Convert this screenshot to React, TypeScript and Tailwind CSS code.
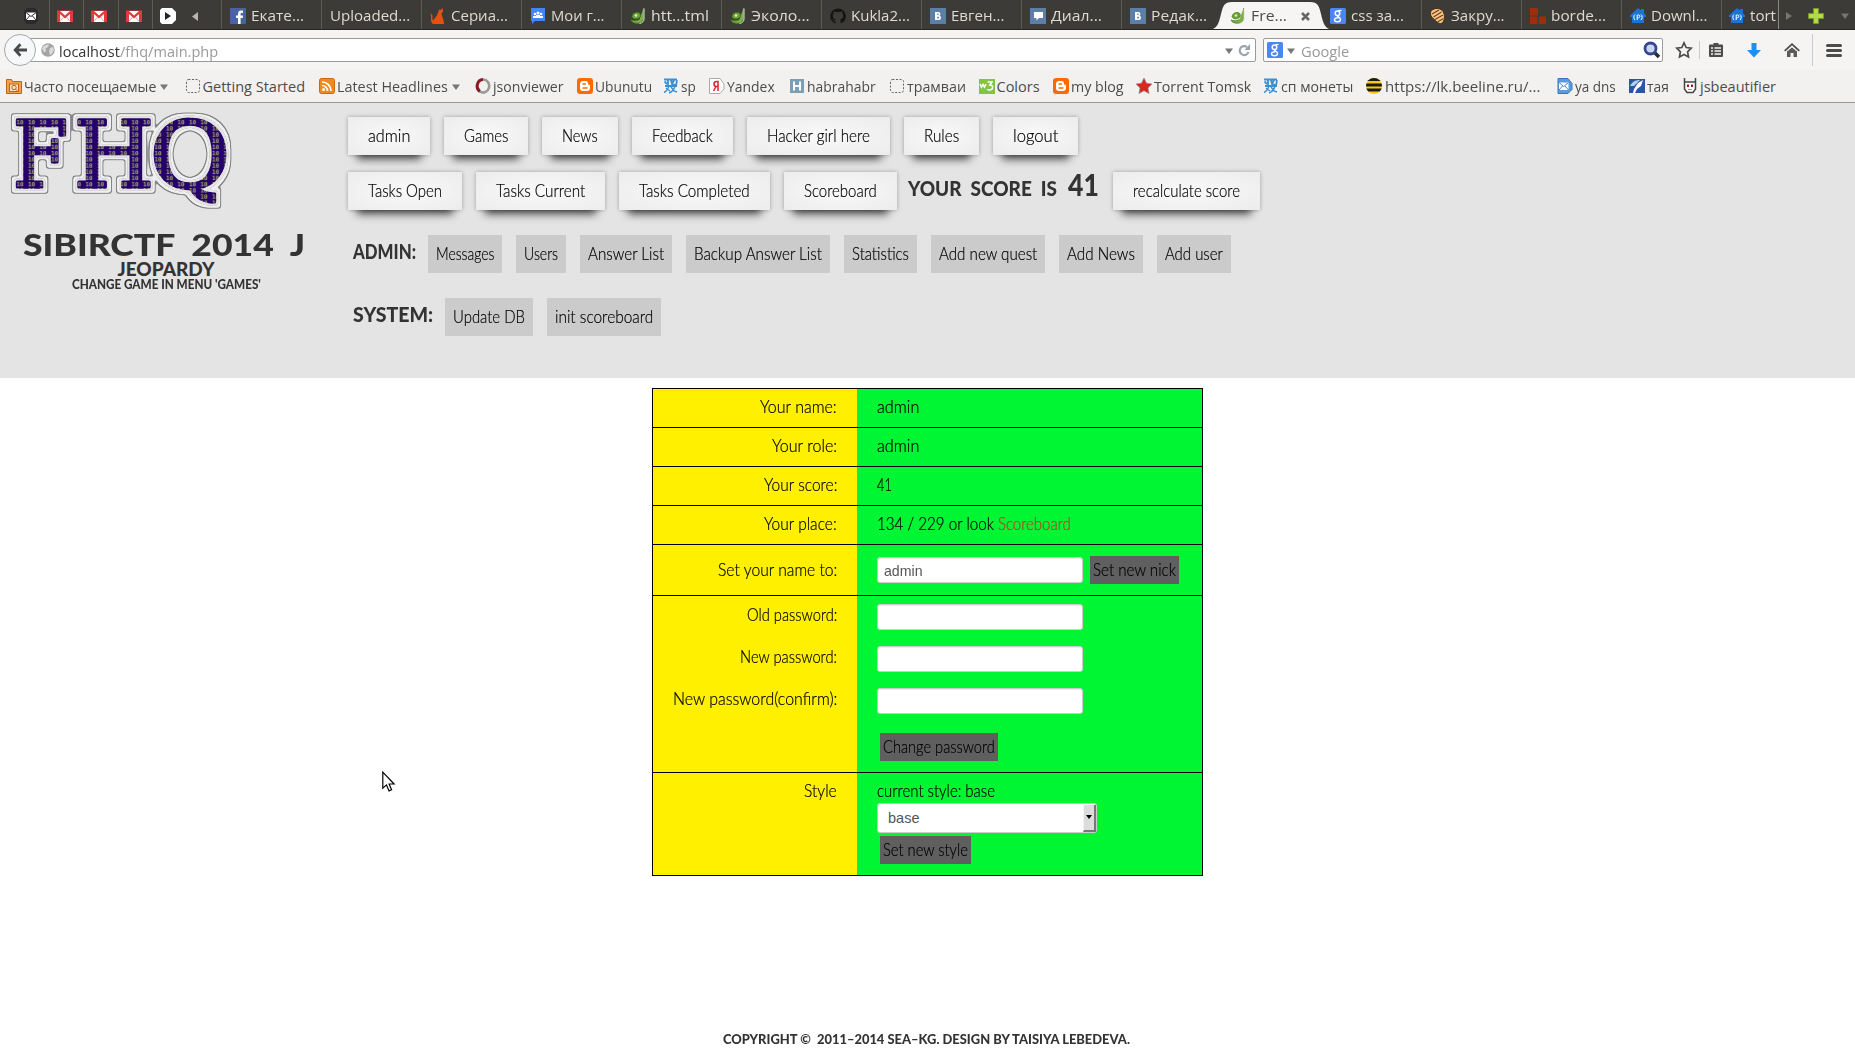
import React, { useLayoutEffect, useRef, useState } from "react";

type FitProps = { w: number; className?: string; children: React.ReactNode };

/* A single line of text stretched or narrowed to a given width. */
function Fit({ w, className = "", children }: FitProps) {
  const ref = useRef<HTMLSpanElement>(null);
  const [k, setK] = useState(1);
  useLayoutEffect(() => {
    if (ref.current) setK(w / ref.current.offsetWidth);
  }, [w]);
  return (
    <span className={`inline-flex shrink-0 whitespace-nowrap ${className}`} style={{ width: w }}>
      <span ref={ref} className="inline-block shrink-0 origin-left whitespace-pre" style={{ transform: `scaleX(${k})` }}>
        {children}
      </span>
    </span>
  );
}

const UI = "font-['Open_Sans',sans-serif]";
const HAND = "font-['Lato',sans-serif] font-black text-[#333]";
const BODY = "font-['Lato',sans-serif] text-[17px] font-light leading-[22px] text-black [-webkit-text-stroke:0.2px_currentColor]";

function Icon({ kind }: { kind: string }) {
  const p = { width: 16, height: 16, viewBox: "0 0 16 16", className: "shrink-0" };
  switch (kind) {
    case "mail":
      return (
        <svg {...p}>
          <path d="M4 0h8l3 3v10l-3 3H4l-3-3V3z" fill="#2b2b2b" />
          <rect x="3" y="4.500" width="10" height="7.500" fill="#fff" />
          <path d="M3 4.500l5 4 5-4M3 12l3.500-4M13 12l-3.500-4" fill="none" stroke="#2b2b2b" />
        </svg>
      );
    case "gmail":
      return (
        <svg {...p}>
          <rect y="2.500" width="16" height="11.500" fill="#e03a3a" />
          <path d="M3 3h10L8 7.500z" fill="#fff" />
          <path d="M3 14V6l5 4.500L13 6v8z" fill="#fff" />
          <path d="M3 13.500L6.500 9M13 13.500L9.500 9" stroke="#e9a0a0" />
        </svg>
      );
    case "play":
      return (
        <svg {...p}>
          <path d="M2 0h10l4 4v8l-4 4H2l-2-2V2z" fill="#fff" />
          <path d="M5 4l6 4-6 4z" fill="#222" />
        </svg>
      );
    case "fb":
      return (
        <svg {...p}>
          <rect width="16" height="16" rx="1" fill="#4862a3" />
          <path d="M8 16V10H6V7.500h2V6c0-2.400 1.300-3.500 3.300-3.500H13V5h-1.300c-.8 0-1.100.3-1.100 1v1.500H13L12.700 10h-2.100v6z" fill="#fff" />
        </svg>
      );
    case "cat":
      return (
        <svg {...p}>
          <path d="M8 5l1-3.500L10.500 2 12.500 0l.5 3.500-1.500 2L12 8l1.500 4 .5 4H4c-2 0-3-2-3-4.500C1 9 1.500 7 0 5.500c2.500.5 3 2.500 2.300 5L3 12.500 6.500 8z" fill="#e8500f" />
        </svg>
      );
    case "group":
      return (
        <svg {...p}>
          <path d="M1 0h14v13H5l-3 3v-3H1z" fill="#4285f4" />
          <circle cx="5" cy="6" r="1.300" fill="#fff" /><circle cx="8" cy="5" r="1.500" fill="#fff" /><circle cx="11" cy="6" r="1.300" fill="#fff" />
          <path d="M3 10V8h3V7h4v1h3v2z" fill="#fff" />
        </svg>
      );
    case "snake":
      return (
        <svg {...p}>
          <path d="M13.500 0v10c0 3-2.500 5.200-6 5.200-3.500 0-5.500-1-6.500-3.200 2 1.500 7 1 8.500-.5" fill="#7fb04a" stroke="#4f8a2a" />
          <path d="M14 .5v10.500c0 2-1.500 4-4.500 4.500" fill="none" stroke="#d8e8c8" />
          <path d="M2 8.500C2.500 5.500 5 4 8 4.500c2.500.5 3 3 1.500 5-2 2-7 2-7.500-1z" fill="#6aa32f" stroke="#3f7420" strokeWidth=".6" />
          <circle cx="6" cy="7.500" r="1.300" fill="#dfeecb" />
        </svg>
      );
    case "github":
      return (
        <svg {...p}>
          <path d="M8 .5a7.700 7.700 0 0 0-2.500 15v-2.500c-2 .4-2.500-1-3-1.800 1 0 1.500 1 2.200 1.100.5 0 .8-.3 1-.8C3.500 11 2.700 9.500 2.900 7.500c0-.8.3-1.500.8-2-.2-.7-.2-1.500.1-2.200.9 0 1.600.5 2.200.9 1.300-.3 2.700-.3 4 0 .6-.4 1.300-.9 2.200-.9.3.7.3 1.500.1 2.200.5.5.8 1.200.8 2 .2 2-.6 3.500-2.900 4 .3.400.4 1 .4 1.600v2.400A7.700 7.700 0 0 0 8 .5z" fill="#161514" />
        </svg>
      );
    case "vk":
      return (
        <svg {...p}>
          <rect width="16" height="16" fill="#5b7fa8" />
          <path d="M5 4h3.500a2 2 0 0 1 1 3.700A2.200 2.200 0 0 1 9 12H5zM7.200 5.600v1.500h.8a.7.7 0 0 0 0-1.500zM7.200 8.700v1.700h1a.8.8 0 0 0 0-1.700z" fill="#fff" fillRule="evenodd" />
        </svg>
      );
    case "chat":
      return (
        <svg {...p}>
          <rect width="16" height="16" fill="#5b7fa8" />
          <path d="M4 4h9v6h-4l-2.500 2.500V10H4z" fill="#fff" />
        </svg>
      );
    case "g":
      return (
        <svg {...p}>
          <rect width="16" height="16" rx="1.500" fill="#4a86f4" />
          <circle cx="7.500" cy="5.200" r="2.300" fill="none" stroke="#fff" strokeWidth="1.500" />
          <path d="M8.500 2.500h3" stroke="#fff" strokeWidth="1.200" />
          <path d="M7 7.500c0 1.500 3.500 1.500 3.500 4 0 1.300-1.200 2.200-3 2.200s-3-.8-3-2 1.500-2 4-2" fill="none" stroke="#fff" strokeWidth="1.400" />
        </svg>
      );
    case "mummy":
      return (
        <svg {...p}>
          <path d="M3 1.500C7-.5 11 .5 13 3.500s2 8 0 10.500-4.500 1.500-6 0S.5 9 .5 6 1 2.500 3 1.500z" fill="#f0c48a" stroke="#4a2a10" />
          <path d="M2 6l7-4M3.500 9l8-5M5 11.500l8-4.500M7.500 14l6-3.500" stroke="#7a3e12" strokeWidth="1.100" />
        </svg>
      );
    case "blocks":
      return (
        <svg {...p}>
          <path d="M0 0h8v7.500H0zM0 8.500h7.500V16H0zM9 8.500h7V16H9z" fill="#9c2f04" />
        </svg>
      );
    case "house":
      return (
        <svg {...p}>
          <path d="M8 0l3 2.500V1h3v4L16 7.500V9h-2v6H2V9H0V7.500z" fill="#1a74d4" />
          <path d="M5 6.500c-1.500 1-1.500 4.500 0 5.500M11 6.500c1.500 1 1.500 4.500 0 5.500M7.200 12V7h1.300a1.200 1.200 0 0 1 0 2.700H7.200" fill="none" stroke="#fff" />
        </svg>
      );
    case "folder":
      return (
        <svg {...p}>
          <path d="M.5 1.500h5l1 2h9v12H.5z" fill="#f0a050" stroke="#b8641c" />
          <rect x="3.500" y="6" width="9" height="7.500" fill="#fbe3c4" stroke="#b8641c" />
          <circle cx="8" cy="9.500" r="2.200" fill="none" stroke="#b8641c" /><path d="M9.500 11l3 3" stroke="#b8641c" />
        </svg>
      );
    case "dash":
      return (
        <svg {...p}>
          <rect x="1.500" y="1.500" width="13" height="13" rx="2" fill="none" stroke="#666" strokeDasharray="2 1.500" />
        </svg>
      );
    case "rss":
      return (
        <svg {...p}>
          <rect x=".5" y=".5" width="15" height="15" rx="2" fill="#f08a1d" stroke="#c9690f" />
          <circle cx="4.500" cy="11.500" r="1.500" fill="#fff" />
          <path d="M3 7.500a5.500 5.500 0 0 1 5.500 5.500M3 4a9 9 0 0 1 9 9" fill="none" stroke="#fff" strokeWidth="1.700" />
        </svg>
      );
    case "ring":
      return (
        <svg {...p}>
          <path d="M8 1.500a6 6.500 0 0 0-3 12" fill="none" stroke="#8c1a24" strokeWidth="3" />
          <path d="M8 1.500a6 6.500 0 1 1-3 12" fill="none" stroke="#999" strokeWidth="2.600" />
        </svg>
      );
    case "blogger":
      return (
        <svg {...p}>
          <rect width="16" height="16" rx="3" fill="#ff6a00" />
          <path d="M6 3h2.500C10.300 3 11 4.200 11 6c0 1 2 .4 2 1.500V10c0 2-1.200 3-3 3H6c-1.800 0-3-1-3-3V6c0-2 1.200-3 3-3z" fill="#fff" />
          <path d="M6 6h2.500M6 10h4" stroke="#ff6a00" strokeWidth="1.400" strokeLinecap="round" />
        </svg>
      );
    case "sp":
      return (
        <svg {...p}>
          <rect width="16" height="16" fill="#eef5fb" />
          <path d="M1 1.500h13M1.500 3.500L4 6M5 2v5M2 8h12M8 2l1 4M11 2l-2 4 4 1M14 2l-1 6" fill="none" stroke="#3d8fcf" strokeWidth="1.800" />
          <path d="M6 8c-1 3-2 5-5 6.500M8 9l3 4 3 1M12 8c-1 4-3 6-6 7M3 10l4 3" fill="none" stroke="#3d8fcf" strokeWidth="1.400" />
        </svg>
      );
    case "ya":
      return (
        <svg {...p}>
          <path d="M.5.500H11L15 6v5l-4 4.500H.5z" fill="#fff" stroke="#aaa" />
          <path d="M9 13V3.500H7.500C5.500 3.500 5 4.800 5 6s.6 2.500 2.500 2.500H9M7 8.500L4.500 13" fill="none" stroke="#d8232a" strokeWidth="1.500" />
        </svg>
      );
    case "habr":
      return (
        <svg {...p}>
          <rect x="1" y="1" width="14" height="14" fill="#7ba0b5" />
          <path d="M5 3.500v9M11 3.500v9M5 8h6" stroke="#fff" strokeWidth="2" />
        </svg>
      );
    case "w3":
      return (
        <svg {...p}>
          <rect y="1" width="16" height="15" fill="#84c443" />
          <path d="M1 6l1.500 3L4 6.500 5.500 9 7 6M8.500 4H13l-2 3c4 0 3 5-.5 5-1 0-2-.5-2-1" fill="none" stroke="#fff" strokeWidth="1.600" />
        </svg>
      );
    case "star":
      return (
        <svg {...p}>
          <path d="M8 0l2.500 5.200 5.500.8-4 3.900 1 5.600-5-2.700-5 2.700 1-5.600L0 6l5.500-.8z" fill="#d32a20" stroke="#8c8c8c" strokeWidth=".7" />
        </svg>
      );
    case "bee":
      return (
        <svg {...p}>
          <clipPath id="bee"><circle cx="8" cy="8" r="8" /></clipPath>
          <g clipPath="url(#bee)">
            <rect width="16" height="16" fill="#f8c81c" />
            <path d="M0 1.500h16M0 7h16M0 12h16" stroke="#1c1a12" strokeWidth="3" />
          </g>
        </svg>
      );
    case "yamail":
      return (
        <svg {...p}>
          <path d="M1 .5h10l4 5v6l-4 4H1z" fill="#5b9bdc" stroke="#3b76b8" />
          <rect x="2" y="4.500" width="9.500" height="7.500" fill="#fff" /><path d="M2 4.500l4.700 4 4.700-4M2 12l3.500-4M11.500 12L8 8" stroke="#4b86c4" fill="none" />
        </svg>
      );
    case "taya":
      return (
        <svg {...p}>
          <rect y="1" width="16" height="14" fill="#2a55a4" />
          <path d="M4 15l1-4 4-6 5-3-2 6-4 3-2 4z" fill="#fff" /><path d="M1 8c2-4 5-6 10-6L5 8z" fill="#b5cdee" />
        </svg>
      );
    default:
      return (
        <svg {...p}>
          <path d="M2.500 0v4M13.500 0v4M2.500 4h11v7L11 14.500H5L2.500 11z" fill="#fff" stroke="#444" strokeWidth="1.500" />
          <path d="M6 6.500v2.500M10 6.500v2.500" stroke="#a01818" strokeWidth="2" /><path d="M6 11.500h4" stroke="#999" />
        </svg>
      );
  }
}

function Caret({ color = "#777", className = "" }: { color?: string; className?: string }) {
  return (
    <svg width="8" height="6" viewBox="0 0 8 6" className={`shrink-0 ${className}`}>
      <path d="M0 .5h8L4 6z" fill={color} />
    </svg>
  );
}

const tabsLeft: [string, string, number][] = [
  ["fb", "Екате...", 53],
  ["", "Uploaded...", 80],
  ["cat", "Сериа...", 57],
  ["group", "Мои г...", 53],
  ["snake", "htt...tml", 58],
  ["snake", "Эколо...", 59],
  ["github", "Kukla2...", 59],
  ["vk", "Евген...", 53],
  ["chat", "Диал...", 51],
  ["vk", "Редак...", 56],
];
const tabsRight: [string, string, number][] = [
  ["g", "css за...", 53],
  ["mummy", "Закру...", 54],
  ["blocks", "borde...", 55],
  ["house", "Downl...", 56],
];

function Tab({ icon, label, w, line = true }: { icon: string; label: string; w: number; line?: boolean }) {
  return (
    <div className={`flex h-[29px] w-[100px] shrink-0 items-center gap-[5px] border-l pl-[8px] pt-[3px] ${line ? "border-[#5e5c54]" : "border-transparent"}`}>
      {icon && <Icon kind={icon} />}
      <Fit w={w} className="text-[14.500px] leading-[20px] text-[#dfdbd2]">{label}</Fit>
    </div>
  );
}

function TabBar() {
  return (
    <div className="flex h-[30px] overflow-hidden border-b border-[#262521] bg-[#3c3b37]">
      <div className="flex w-[221px] shrink-0 items-center pl-[15px]">
        {["mail", "gmail", "gmail", "gmail", "play"].map((k, i) => (
          <div key={i} className={`flex h-full w-[34.200px] items-center justify-center border-l pr-[3px] pt-[3px] ${i ? "border-[#5e5c54]" : "border-transparent"}`}>
            <Icon kind={k} />
          </div>
        ))}
        <svg width="6" height="9" viewBox="0 0 6 9" className="ml-[6px] mt-[3px]"><path d="M6 0v9L0 4.500z" fill="#b9b5ab" /></svg>
      </div>
      {tabsLeft.map(([i, l, w]) => <Tab key={l} icon={i} label={l} w={w} />)}
      <div className="relative h-[30px] w-[100px] shrink-0">
        <svg width="124" height="30" viewBox="0 0 124 30" className="absolute -left-3 top-0">
          <path d="M0 30C9 29 10 22 12 14S15 2 23 2H101c8 0 9 4 11 12s3 15 12 16z" fill="#f6f5f4" />
        </svg>
        <div className="relative flex h-[29px] items-center gap-[5px] pl-[9px] pt-[3px]">
          <Icon kind="snake" />
          <Fit w={36} className="text-[14.500px] leading-[20px] text-[#4c4c4c]">Fre...</Fit>
          <svg width="9" height="9" viewBox="0 0 9 9" className="ml-[9px]"><path d="M1 1l7 7M8 1L1 8" stroke="#666" strokeWidth="2.500" /></svg>
        </div>
      </div>
      {tabsRight.map(([i, l, w], n) => <Tab key={l} icon={i} label={l} w={w} line={n > 0} />)}
      <div className="flex w-[58px] shrink-0 items-center gap-[5px] overflow-hidden border-l border-r border-l-[#5e5c54] border-r-[#8a887f] pl-[7px] pt-[3px]">
        <Icon kind="house" />
        <Fit w={26} className="text-[14.500px] leading-[20px] text-[#dfdbd2]">tort</Fit>
      </div>
      <div className="flex grow items-center pt-[2px]">
        <svg width="6" height="8" viewBox="0 0 6 8" className="ml-[7px]"><path d="M0 0l6 4-6 4z" fill="#77756d" /></svg>
        <svg width="16" height="16" viewBox="0 0 16 16" className="ml-[16px]"><path d="M5.500.500h5v5h5v5h-5v5h-5v-5h-5v-5h5z" fill="#b4d84a" stroke="#6f9a1c" /></svg>
        <Caret color="#77756d" className="ml-[17px]" />
      </div>
    </div>
  );
}

function Toolbar() {
  return (
    <div className="flex h-[40px] items-center bg-[#f5f4f3] pl-1">
      <div className="relative z-10 flex size-8 shrink-0 items-center justify-center rounded-full border border-[#a3a8ad] bg-[#f7f8f9]">
        <svg width="14" height="14" viewBox="0 0 16 16"><path d="M8.500 1.500L2.500 8l6 6.500M3 8h13" fill="none" stroke="#4a4a4a" strokeWidth="3.200" /></svg>
      </div>
      <div className="-ml-2 flex h-6 w-[1228px] shrink-0 items-center rounded-r-[2px] border border-[#9b9b9f] bg-white pl-[12px]">
        <svg width="14" height="14" viewBox="0 0 14 14" className="mr-1"><circle cx="7" cy="7" r="6.800" fill="#a4a4a4" /><path d="M2 4c2-3 4-1 5-3 2 2-1 4-2 4s1 3-1 4-1-2-3-3zM9 5l3-1 1 3-2 4-2 1-1-4z" fill="#dadada" /></svg>
        <Fit w={61} className="pt-px text-[15px] leading-[20px] text-[#333]">localhost</Fit>
        <Fit w={98} className="pt-px text-[15px] leading-[20px] text-[#999]">/fhq/main.php</Fit>
        <Caret className="ml-auto mr-[5px] mt-px" />
        <svg width="13" height="13" viewBox="0 0 13 13" className="mr-[4px]"><path d="M10.500 8A4.500 4.500 0 1 1 9 3" fill="none" stroke="#9aa3ab" strokeWidth="2.200" /><path d="M12 0v6H6.500z" fill="#9aa3ab" /></svg>
      </div>
      <div className="ml-[7px] flex h-6 w-[400px] shrink-0 items-center rounded-[2px] border border-[#9b9b9f] bg-white pl-[3px] pr-[1px]">
        <Icon kind="g" />
        <Caret className="ml-1 mr-[6px] mt-px" />
        <Fit w={48} className="pt-px text-[15px] leading-[20px] text-[#999]">Google</Fit>
        <svg width="18" height="18" viewBox="0 0 18 18" className="ml-auto"><path d="M11.500 11.500l4.500 4.500" stroke="#2c2c34" strokeWidth="3.600" /><circle cx="7.500" cy="7.500" r="5.500" fill="#c9d6f0" stroke="#33468f" strokeWidth="2.800" /></svg>
      </div>
      <svg width="18" height="18" viewBox="0 0 18 18" className="ml-[12px] shrink-0"><path d="M9 1.800l2.200 4.700 5 .7-3.600 3.600.9 5.200L9 13.500 4.500 16l.9-5.200L1.800 7.200l5-.7z" fill="none" stroke="#4c4c4c" strokeWidth="1.700" /></svg>
      <div className="ml-[6px] h-[18px] w-px bg-[#c3ccd4]" />
      <svg width="16" height="16" viewBox="0 0 16 16" className="ml-[8px] shrink-0"><path d="M5.500 1h5v1.500H14a1 1 0 0 1 1 1V14a1 1 0 0 1-1 1H2a1 1 0 0 1-1-1V3.500a1 1 0 0 1 1-1h3.500z" fill="#4c4c4c" /><path d="M3 6h2M6.500 6H13M3 9h2M6.500 9H13M3 12h2M6.500 12H13" stroke="#f5f4f3" strokeWidth="1.600" /></svg>
      <svg width="16" height="16" viewBox="0 0 16 16" className="ml-[22px] shrink-0"><path d="M5.500 1h5v7H15l-7 7.500L1 8h4.500z" fill="#1a8ff5" /></svg>
      <svg width="16" height="16" viewBox="0 0 16 16" className="ml-[22px] shrink-0"><path d="M3 9.500L8 5.500l5 4V15H9.500v-4h-3v4H3z" fill="#5a5a5a" /><path d="M.7 8.900L8 2.200l7.300 6.700" fill="none" stroke="#4c4c4c" strokeWidth="1.800" /></svg>
      <div className="ml-[12px] h-8 w-px bg-[#c3ccd4]" />
      <div className="ml-[13px] flex w-4 flex-col gap-[2px]">
        <div className="h-[3px] rounded-full bg-[#4c4c4c]" />
        <div className="h-[3px] rounded-full bg-[#4c4c4c]" />
        <div className="h-[3px] rounded-full bg-[#4c4c4c]" />
      </div>
    </div>
  );
}

/* icon, label, label width, distance to the next bookmark, has submenu */
const bookmarks: [string, string, number, number, boolean?][] = [
  ["folder", "Часто посещаемые", 132, 178.500, true],
  ["dash", "Getting Started", 103, 134],
  ["rss", "Latest Headlines", 111, 156, true],
  ["ring", "jsonviewer", 71, 102],
  ["blogger", "Ubunutu", 57, 86.500],
  ["sp", "sp", 15, 46],
  ["ya", "Yandex", 48, 80],
  ["habr", "habrahabr", 69, 100],
  ["dash", "трамваи", 59, 89.500],
  ["w3", "Colors", 43, 74.500],
  ["blogger", "my blog", 53, 83],
  ["star", "Torrent Tomsk", 97, 127],
  ["sp", "сп монеты", 72, 103],
  ["bee", "https://lk.beeline.ru/...", 155, 191],
  ["yamail", "ya dns", 41, 72],
  ["taya", "тая", 22, 53],
  ["js", "jsbeautifier", 76, 100],
];

function Bookmarks() {
  return (
    <div className="flex h-[33px] items-center border-b border-[#979797] bg-[#f2f1f0] pl-[6px]">
      {bookmarks.map(([i, l, w, d, sub]) => (
        <div key={l} className="flex shrink-0 items-center" style={{ width: d }}>
          <Icon kind={i} />
          <Fit w={w} className={`pt-[2px] text-[14.500px] leading-[20px] text-[#4c4c4c] ${i === "bee" ? "ml-[3px]" : "ml-[2px]"}`}>{l}</Fit>
          {sub && <Caret className="ml-[4px] mt-px" />}
        </div>
      ))}
    </div>
  );
}

function Ring({ r, color, name }: { r: number; color: string; name: string }) {
  return (
    <>
      <feMorphology in="SourceAlpha" operator="dilate" radius={r} />
      <feGaussianBlur stdDeviation="1.2" />
      <feComponentTransfer result={name + "a"}>
        <feFuncA type="linear" slope="4" intercept="-1.5" />
      </feComponentTransfer>
      <feFlood floodColor={color} />
      <feComposite operator="in" in2={name + "a"} result={name} />
    </>
  );
}

function Logo() {
  const letters: [string, number, number][] = [["F", 13, 55], ["H", 74, 80], ["Q", 150, 80]];
  return (
    <svg width="240" height="104" viewBox="0 103 240 104" className="block shrink-0 overflow-visible">
      <defs>
        <pattern id="bits" width="11.500" height="6.200" patternUnits="userSpaceOnUse" patternTransform="translate(4 119)">
          <rect width="11.500" height="6.200" fill="#25006b" />
          <text x="1" y="5.200" fontFamily="DejaVu Sans Mono" fontWeight="bold" fontSize="6" fill="#a3b06a">10</text>
        </pattern>
        <filter id="outline" filterUnits="userSpaceOnUse" x="0" y="103" width="240" height="115" colorInterpolationFilters="sRGB">
          {Ring({ r: 4.5, color: "#858585", name: "a" })}
          {Ring({ r: 3.6, color: "#efefef", name: "b" })}
          {Ring({ r: 2.3, color: "#8f8f8f", name: "c" })}
          {Ring({ r: 1.5, color: "#e4e4e4", name: "d" })}
          <feMerge>
            <feMergeNode in="a" /><feMergeNode in="b" /><feMergeNode in="c" /><feMergeNode in="d" /><feMergeNode in="SourceGraphic" />
          </feMerge>
        </filter>
      </defs>
      <g filter="url(#outline)" fontFamily="DejaVu Serif" fontSize="91" strokeLinejoin="round" fill="url(#bits)" stroke="url(#bits)" strokeWidth="3.500">
        {letters.map(([l, x, w]) => (
          <text key={l} x={x} y="186.500" textLength={w} lengthAdjust="spacingAndGlyphs">{l}</text>
        ))}
      </g>
    </svg>
  );
}

function NavButton({ w, children }: { w: number; children: string }) {
  return (
    <button className={`flex h-[38px] shrink-0 items-center justify-center bg-[radial-gradient(ellipse_at_center,#f9f9f9,#ececec)] pb-[1px] shadow-[0_13px_8px_-9px_rgba(0,0,0,0.7),0_0_4px_rgba(0,0,0,0.3)] ${BODY}`} style={{ width: w }}>
      <Fit w={w - 40}>{children}</Fit>
    </button>
  );
}

function FlatButton({ w, children }: { w: number; children: string }) {
  return (
    <button className={`flex h-[38px] shrink-0 items-center justify-center bg-[#cbcbcb] pb-[1px] ${BODY}`} style={{ width: w }}>
      <Fit w={w - 16}>{children}</Fit>
    </button>
  );
}

function Header() {
  return (
    <header className="flex h-[275px] bg-[#e4e4e4]">
      <div className="flex w-[348px] shrink-0 flex-col">
        <Logo />
        <div className={`flex w-[328px] flex-col items-center pt-[22px] ${HAND}`}>
          <Fit w={282} className="text-[31px] leading-[31px]">SIBIRCTF  2014  J</Fit>
          <Fit w={97} className="-mt-[2px] mr-[-4px] text-[19px] leading-[22px]">JEOPARDY</Fit>
          <Fit w={189} className="-mt-[2px] mr-[-5px] text-[13px] leading-[12px]">CHANGE GAME IN MENU 'GAMES'</Fit>
        </div>
      </div>
      <div className="flex flex-col pt-[14px]">
        <div className="flex h-[55px] gap-[14px]">
          <NavButton w={82}>admin</NavButton>
          <NavButton w={84}>Games</NavButton>
          <NavButton w={76}>News</NavButton>
          <NavButton w={101}>Feedback</NavButton>
          <NavButton w={143}>Hacker girl here</NavButton>
          <NavButton w={75}>Rules</NavButton>
          <NavButton w={85}>logout</NavButton>
        </div>
        <div className="flex h-[63px] gap-[14px]">
          <NavButton w={114}>Tasks Open</NavButton>
          <NavButton w={129}>Tasks Current</NavButton>
          <NavButton w={151}>Tasks Completed</NavButton>
          <NavButton w={113}>Scoreboard</NavButton>
          <div className={`-ml-[3px] -mt-[2px] flex h-[28px] items-baseline gap-[11px] ${HAND}`}>
            <Fit w={149} className="text-[20px] leading-[28px]">YOUR  SCORE  IS</Fit>
            <Fit w={31} className="text-[30px] leading-[28px]">41</Fit>
          </div>
          <NavButton w={147}>recalculate score</NavButton>
        </div>
        <div className="flex h-[63px] gap-[14px]">
          <Fit w={63} className={`-mr-[2px] ml-[5px] text-[20px] leading-[33px] ${HAND}`}>ADMIN:</Fit>
          <FlatButton w={74}>Messages</FlatButton>
          <FlatButton w={50}>Users</FlatButton>
          <FlatButton w={92}>Answer List</FlatButton>
          <FlatButton w={144}>Backup Answer List</FlatButton>
          <FlatButton w={73}>Statistics</FlatButton>
          <FlatButton w={114}>Add new quest</FlatButton>
          <FlatButton w={84}>Add News</FlatButton>
          <FlatButton w={74}>Add user</FlatButton>
        </div>
        <div className="flex gap-[14px]">
          <Fit w={80} className={`-mr-[2px] ml-[5px] text-[20px] leading-[33px] ${HAND}`}>SYSTEM:</Fit>
          <FlatButton w={88}>Update DB</FlatButton>
          <FlatButton w={114}>init scoreboard</FlatButton>
        </div>
      </div>
    </header>
  );
}

function Row({ className, label, children }: { className: string; label: React.ReactNode; children: React.ReactNode }) {
  return (
    <div className={`flex border-t border-black ${className}`}>
      <div className="flex w-[204px] shrink-0 flex-col items-end bg-[#fff000] pr-5 pt-[7px]">{label}</div>
      <div className="flex grow flex-col items-start pl-5 pt-[7px]">{children}</div>
    </div>
  );
}

const field = "flex h-[26px] w-[206px] items-center rounded-[3px] border border-[#ccc] bg-white pl-[6px] pt-[2px] font-['Liberation_Sans'] text-[14.500px] font-normal text-[#555] shadow-[inset_0_1px_1px_rgba(0,0,0,0.08)] [-webkit-text-stroke:0]";
const action = "flex h-7 items-center bg-[#5f5f5f] px-[3px] pb-px";

function Profile() {
  return (
    <section className={`mx-auto flex w-[551px] flex-col border-x border-b border-black bg-[#00f532] ${BODY}`}>
      <Row className="h-[39px]" label={<Fit w={77}>Your name:</Fit>}><Fit w={42}>admin</Fit></Row>
      <Row className="h-[39px]" label={<Fit w={65}>Your role:</Fit>}><Fit w={42}>admin</Fit></Row>
      <Row className="h-[39px]" label={<Fit w={73}>Your score:</Fit>}><Fit w={15}>41</Fit></Row>
      <Row className="h-[39px]" label={<Fit w={73}>Your place:</Fit>}>
        <div className="flex gap-[4px]"><Fit w={117}>134 / 229 or look</Fit><Fit w={73} className="text-[#c23b22]">Scoreboard</Fit></div>
      </Row>
      <Row className="h-[51px]" label={<div className="flex pt-[7px]"><Fit w={119}>Set your name to:</Fit></div>}>
        <div className="flex items-center gap-[7px] pt-[4px]">
          <div className={field}><Fit w={39}>admin</Fit></div>
          <div className={action}><Fit w={83}>Set new nick</Fit></div>
        </div>
      </Row>
      <Row className="h-[177px]" label={<div className="flex flex-col items-end gap-[20px] pt-px"><Fit w={90}>Old password:</Fit><Fit w={97}>New password:</Fit><Fit w={164}>New password(confirm):</Fit></div>}>
        <div className="flex flex-col gap-4 pt-px">
          <div className={field} /><div className={field} /><div className={field} />
        </div>
        <div className={`ml-[3px] mt-[19px] ${action}`}><Fit w={112}>Change password</Fit></div>
      </Row>
      <Row className="h-[103px]" label={<Fit w={33}>Style</Fit>}>
        <Fit w={118}>current style: base</Fit>
        <div className="mt-px flex h-[30px] w-[220px] items-center justify-between rounded-[3px] border border-[#ccc] bg-white pl-[10px] font-['Liberation_Sans'] text-[14.500px] font-normal text-[#555] [-webkit-text-stroke:0]">
          <Fit w={31}>base</Fit>
          <div className="flex h-[27px] w-[13px] items-center justify-center border-b-2 border-l border-r-2 border-b-[#777] border-l-[#f4f4f4] border-r-[#777] bg-[#dcdcdc]">
            <svg width="6" height="4" viewBox="0 0 6 4"><path d="M0 0h6L3 4z" fill="#000" /></svg>
          </div>
        </div>
        <div className={`ml-[3px] mt-[3px] ${action}`}><Fit w={85}>Set new style</Fit></div>
      </Row>
    </section>
  );
}

export default function App() {
  return (
    <div className={`relative flex h-[1056px] w-[1855px] flex-col overflow-hidden bg-white ${UI}`}>
      <TabBar />
      <Toolbar />
      <Bookmarks />
      <Header />
      <main className="flex grow flex-col pt-[10px]">
        <Profile />
      </main>
      <footer className={`flex h-[26px] justify-center pr-[2px] text-[12.500px] leading-[20px] ${HAND}`}>
        <Fit w={407}>COPYRIGHT ©  2011–2014 SEA–KG. DESIGN BY TAISIYA LEBEDEVA.</Fit>
      </footer>
      <svg width="14" height="22" viewBox="0 0 14 22" className="absolute left-[382px] top-[771px]">
        <path d="M.8 1.200v16l3.700-3.300 2.600 6 2.500-1.100-2.500-5.800h5z" fill="#fff" stroke="#000" strokeWidth="1.200" />
      </svg>
    </div>
  );
}
